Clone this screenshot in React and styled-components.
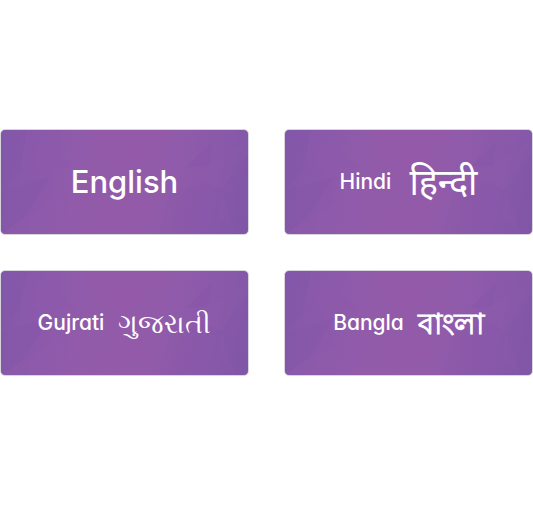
import React from "react";
import styled, { createGlobalStyle } from "styled-components";

const GlobalStyle = createGlobalStyle`
  * { box-sizing: border-box; }
  body { margin: 0; background: #fff; }
`;

const Page = styled.main`
  min-height: 100vh;
  padding-bottom: 1px;
  display: grid;
  grid-template-columns: 1fr 1fr;
  gap: 35px;
  align-content: center;
`;

const Card = styled.button`
  position: relative;
  overflow: hidden;
  height: 106px;
  border: 1px solid #d9d5dc;
  border-radius: 5px;
  padding: 0;
  display: flex;
  align-items: center;
  justify-content: center;
  gap: ${(p) => p.$gap || 0}px;
  color: #fff;
  background: linear-gradient(100deg, #8458aa 0%, #8b59ab 16%, #915baa 34%, #925baa 50%, #915baa 64%, #8b59aa 82%, #8257a8 100%);
  cursor: pointer;
`;

const Facets = styled.svg`
  position: absolute;
  inset: 0;
  width: 100%;
  height: 100%;
`;

const Label = styled.span`
  position: relative;
  font-family: Inter, sans-serif;
  font-feature-settings: "cv11";
  font-size: ${(p) => (p.$large ? 31 : 21)}px;
  font-weight: 500;
  line-height: 32px;
`;

const Native = styled.span`
  position: relative;
  font-family: "Noto Sans", sans-serif;
  font-size: ${(p) => p.$size}px;
  font-weight: 400;
  line-height: 40px;
  -webkit-text-stroke: ${(p) => (p.$heavy ? "1px currentColor" : "0")};
`;

const shapes = [
  ["0,0 26,0 18,40 0,62", "#7952a7", 0.1],
  ["26,0 74,38 18,40", "#9b5daf", 0.08],
  ["0,62 50,48 22,90 0,106", "#7750a5", 0.1],
  ["0,106 22,90 92,52 64,106", "#a064b2", 0.08],
  ["86,0 172,0 130,42 102,34", "#a35ba4", 0.08],
  ["158,0 112,48 74,74 142,12", "#a35ba4", 0.1],
  ["132,52 150,88 90,106 108,72", "#a45ba4", 0.08],
  ["186,38 212,12 208,36", "#704da3", 0.14],
  ["190,46 248,10 222,62", "#9a62b0", 0.08],
  ["222,62 248,24 248,106 236,106", "#704da3", 0.08],
  ["170,64 206,54 192,106 158,106", "#7a50a5", 0.05],
  ["206,54 222,62 218,88 236,106 192,106", "#7a50a5", 0.06],
];

function Option({ children, gap }) {
  return (
    <Card type="button" $gap={gap}>
      <Facets viewBox="0 0 248 106" preserveAspectRatio="none" aria-hidden="true">
        {shapes.map(([points, fill, opacity]) => (
          <polygon key={points} points={points} fill={fill} opacity={opacity} />
        ))}
      </Facets>
      {children}
    </Card>
  );
}

export default function App() {
  return (
    <>
      <GlobalStyle />
      <Page>
        <Option><Label $large>English</Label></Option>
        <Option gap={18}><Label>Hindi</Label><Native lang="hi" $size={36}>हिन्दी</Native></Option>
        <Option gap={14}><Label>Gujrati</Label><Native lang="gu" $size={27}>ગુજરાતી</Native></Option>
        <Option gap={14}><Label>Bangla</Label><Native lang="bn" $size={29} $heavy>বাংলা</Native></Option>
      </Page>
    </>
  );
}
